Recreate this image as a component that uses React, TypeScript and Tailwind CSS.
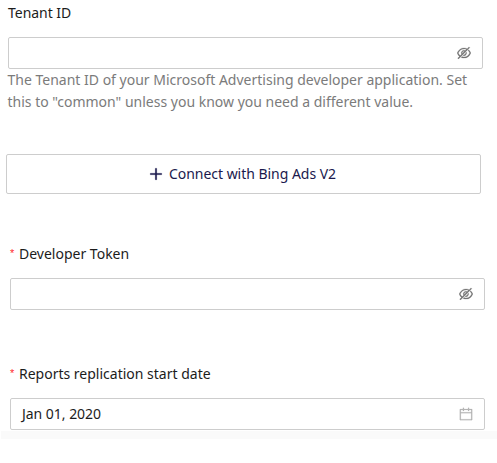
import { AiOutlineCalendar, AiOutlineEyeInvisible, AiOutlinePlus } from "react-icons/ai";
import type { ReactNode } from "react";

const ICON_BOX = "64 64 896 896";

function RequiredLabel({ children }: { children: ReactNode }) {
  return (
    <label className="ml-2.5 flex h-[22px] items-center">
      <span className="mr-1 w-[5px] -translate-y-px font-['Liberation_Sans',sans-serif] text-[11px] leading-none text-[#ff1f2d]">*</span>
      {children}
    </label>
  );
}

function Field({ value, icon, className }: { value?: string; icon: ReactNode; className: string }) {
  return (
    <div className={`flex h-8 w-[475px] items-center justify-between rounded-[2px] border border-[#cdcdcd] bg-white px-[11px] ${className}`}>
      <span className="tracking-[-0.03px]">{value}</span>
      {icon}
    </div>
  );
}

export default function App() {
  return (
    <main className="h-[463px] w-[497px] overflow-hidden bg-white pt-0.5 font-['Noto_Sans',sans-serif] text-sm leading-[22px] text-[#1c1c1c]">
      <label className="ml-2 block h-[22px] tracking-[-0.03px]">Tenant ID</label>
      <Field className="mt-[13px] ml-2" icon={<AiOutlineEyeInvisible viewBox={ICON_BOX} strokeWidth={14} className="size-3.5 text-[#737373]" />} />
      <p className="ml-[7.5px] w-[475px] text-[#7b7b7b]">
        The Tenant ID of your Microsoft Advertising developer application. Set this to "common" unless you know you need a different value.
      </p>
      <button className="mt-[41px] ml-1.5 flex h-10 w-[475px] items-center justify-center gap-1.5 rounded-[2px] border border-[#cdcdcd] bg-white pr-[2px] tracking-[-0.03px] text-[#1a194d]">
        <AiOutlinePlus viewBox={ICON_BOX} strokeWidth={36} className="size-3.5" />
        Connect with Bing Ads V2
      </button>
      <div className="mt-[49px]">
        <RequiredLabel>Developer Token</RequiredLabel>
        <Field className="mt-[13px] ml-2.5" icon={<AiOutlineEyeInvisible viewBox={ICON_BOX} strokeWidth={14} className="size-3.5 text-[#737373]" />} />
      </div>
      <div className="mt-[53px]">
        <RequiredLabel>Reports replication start date</RequiredLabel>
        <Field className="mt-[13px] ml-2.5" value="Jan 01, 2020" icon={<AiOutlineCalendar viewBox={ICON_BOX} strokeWidth={10} className="size-3.5 text-[#b4b4b4]" />} />
      </div>
      <div className="mt-px ml-px h-2 bg-[#fafafa]" />
    </main>
  );
}
